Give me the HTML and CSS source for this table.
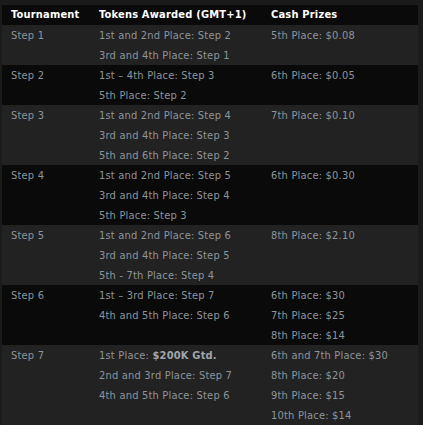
FILE: index.html
```html
<!DOCTYPE html>
<html>
<head>
<meta charset="utf-8">
<link rel="stylesheet" href="styles.css">
</head>
<body>
<table class="prizes">
  <thead>
    <tr><th class="c1">Tournament</th><th class="c2">Tokens Awarded (GMT+1)</th><th class="c3">Cash Prizes</th></tr>
  </thead>
  <tbody>
    <tr class="odd">
      <td><div>Step 1</div></td>
      <td><div>1st and 2nd Place: Step 2</div><div>3rd and 4th Place: Step 1</div></td>
      <td><div>5th Place: $0.08</div></td>
    </tr>
    <tr class="even">
      <td><div>Step 2</div></td>
      <td><div>1st – 4th Place: Step 3</div><div>5th Place: Step 2</div></td>
      <td><div>6th Place: $0.05</div></td>
    </tr>
    <tr class="odd">
      <td><div>Step 3</div></td>
      <td><div>1st and 2nd Place: Step 4</div><div>3rd and 4th Place: Step 3</div><div>5th and 6th Place: Step 2</div></td>
      <td><div>7th Place: $0.10</div></td>
    </tr>
    <tr class="even">
      <td><div>Step 4</div></td>
      <td><div>1st and 2nd Place: Step 5</div><div>3rd and 4th Place: Step 4</div><div>5th Place: Step 3</div></td>
      <td><div>6th Place: $0.30</div></td>
    </tr>
    <tr class="odd">
      <td><div>Step 5</div></td>
      <td><div>1st and 2nd Place: Step 6</div><div>3rd and 4th Place: Step 5</div><div>5th - 7th Place: Step 4</div></td>
      <td><div>8th Place: $2.10</div></td>
    </tr>
    <tr class="even">
      <td><div>Step 6</div></td>
      <td><div>1st – 3rd Place: Step 7</div><div>4th and 5th Place: Step 6</div></td>
      <td><div>6th Place: $30</div><div>7th Place: $25</div><div>8th Place: $14</div></td>
    </tr>
    <tr class="odd">
      <td><div>Step 7</div></td>
      <td><div>1st Place: <b>$200K Gtd.</b></div><div>2nd and 3rd Place: Step 7</div><div>4th and 5th Place: Step 6</div></td>
      <td><div>6th and 7th Place: $30</div><div>8th Place: $20</div><div>9th Place: $15</div><div>10th Place: $14</div></td>
    </tr>
  </tbody>
</table>
</body>
</html>
```
FILE: styles.css
```css
html, body {
  margin: 0;
  padding: 0;
  background: #1b1b1b;
}
body {
  padding: 5px 5px 0 2px;
  font-family: "DejaVu Sans Condensed", "DejaVu Sans", sans-serif;
  font-size: 11px;
  letter-spacing: 0.2px;
  color: #8d949b;
}
.prizes {
  border-collapse: collapse;
  width: 416px;
  table-layout: fixed;
}
.prizes th, .prizes td {
  padding: 0 0 0 9px;
  vertical-align: top;
  text-align: left;
}
.prizes th {
  background: #0a0a0a;
  color: #ffffff;
  font-weight: bold;
  height: 20px;
  line-height: 20px;
}
.c1 { width: 79px; }
.c2 { width: 163px; }
.c3 { width: auto; }
.prizes td div {
  height: 18px;
  line-height: 18px;
  padding-top: 2px;
}
.odd td { background: #222222; }
.even td { background: #0a0a0a; }
.prizes b { color: #a0a6ab; }
```
